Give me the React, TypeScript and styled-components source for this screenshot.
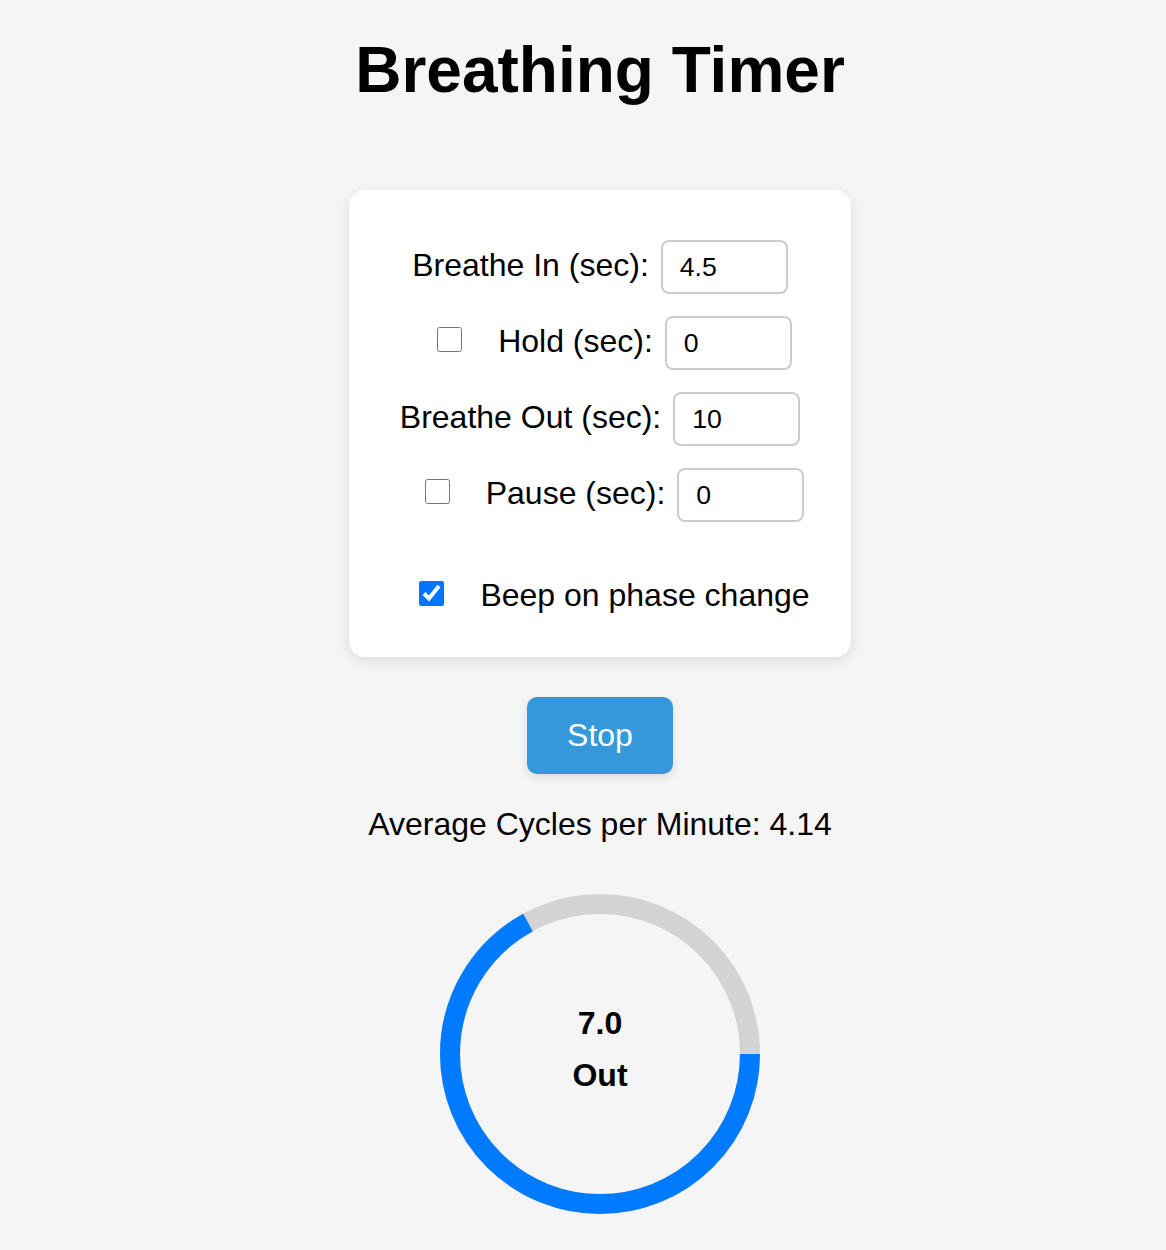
import { useState } from "react";
import styled, { createGlobalStyle } from "styled-components";

const GlobalStyle = createGlobalStyle`
  html, body {
    margin: 0;
    padding: 0;
    background-color: #f5f5f5;
  }
  body {
    font-family: "Liberation Sans", Arial, Helvetica, sans-serif;
    color: #000000;
  }
`;

const RADIUS = 150;
const CIRCUMFERENCE = 2 * Math.PI * RADIUS;

function App() {
  const [inhale, setInhale] = useState("4.5");
  const [hold, setHold] = useState("0");
  const [exhale, setExhale] = useState("10");
  const [pause, setPause] = useState("0");
  const [holdOn, setHoldOn] = useState(false);
  const [pauseOn, setPauseOn] = useState(false);
  const [beep, setBeep] = useState(true);

  // share of the current phase still left, drawn clockwise from 3 o'clock
  const progress = 0.67;

  return (
    <Page>
      <GlobalStyle />
      <Title>Breathing Timer</Title>

      <Card>
        <Row>
          <Label>Breathe In (sec):</Label>
          <NumberInput value={inhale} onChange={(e) => setInhale(e.target.value)} />
        </Row>
        <Row $withCheck>
          <Check checked={holdOn} onChange={(e) => setHoldOn(e.target.checked)} />
          <Label>Hold (sec):</Label>
          <NumberInput value={hold} onChange={(e) => setHold(e.target.value)} />
        </Row>
        <Row>
          <Label>Breathe Out (sec):</Label>
          <NumberInput value={exhale} onChange={(e) => setExhale(e.target.value)} />
        </Row>
        <Row $withCheck>
          <Check checked={pauseOn} onChange={(e) => setPauseOn(e.target.checked)} />
          <Label>Pause (sec):</Label>
          <NumberInput value={pause} onChange={(e) => setPause(e.target.value)} />
        </Row>
        <BeepRow $withCheck>
          <Check checked={beep} onChange={(e) => setBeep(e.target.checked)} />
          <BeepLabel>Beep on phase change</BeepLabel>
        </BeepRow>
      </Card>

      <StopButton>Stop</StopButton>

      <Stats>Average Cycles per Minute: 4.14</Stats>

      <Dial>
        <svg width="320" height="320" viewBox="0 0 320 320">
          <circle cx="160" cy="160" r={RADIUS} fill="none" stroke="#d3d3d3" strokeWidth="20" />
          <circle
            cx="160"
            cy="160"
            r={RADIUS}
            fill="none"
            stroke="#007bff"
            strokeWidth="20"
            strokeDasharray={CIRCUMFERENCE}
            strokeDashoffset={CIRCUMFERENCE * (1 - progress)}
          />
        </svg>
        <DialText>
          <DialLine>7.0</DialLine>
          <DialLine>Out</DialLine>
        </DialText>
      </Dial>
    </Page>
  );
}

export default App;

const Page = styled.div`
  display: flex;
  flex-direction: column;
  align-items: center;
  padding: 33px 0 40px 34px;
`;

const Title = styled.h1`
  margin: 0 0 83px;
  font-size: 64px;
  font-weight: bold;
  line-height: normal;
`;

const Card = styled.div`
  box-sizing: border-box;
  width: 502px;
  padding: 50px 0 43px;
  background: #ffffff;
  border-radius: 16px;
  box-shadow: 0 4px 14px rgba(0, 0, 0, 0.1);
  display: flex;
  flex-direction: column;
  align-items: center;
  gap: 22px;
`;

const Row = styled.div<{ $withCheck?: boolean }>`
  display: flex;
  align-items: baseline;
  justify-content: center;
  padding-left: ${(p) => (p.$withCheck ? "29px" : "0")};
`;

const BeepRow = styled(Row)`
  margin-top: 33px;
`;

const Label = styled.label`
  font-size: 32px;
  line-height: normal;
  margin-right: 12px;
`;

const BeepLabel = styled(Label)`
  margin-right: 0;
`;

const Check = styled.input.attrs({ type: "checkbox" })`
  width: 25px;
  height: 25px;
  margin: 0 36px 0 0;
  accent-color: #0075ff;
`;

const NumberInput = styled.input.attrs({ type: "text" })`
  box-sizing: border-box;
  width: 127px;
  height: 54px;
  padding: 10px 17px;
  border: 2px solid #cccccc;
  border-radius: 8px;
  font-family: "Liberation Sans", Arial, sans-serif;
  font-size: 26.67px;
  color: #000000;
  background: #ffffff;
  outline: none;
`;

const StopButton = styled.button`
  margin-top: 40px;
  padding: 20px 40px;
  border: none;
  border-radius: 10px;
  background-color: #3498db;
  color: #ffffff;
  font-family: "Liberation Sans", Arial, sans-serif;
  font-size: 32px;
  line-height: normal;
  box-shadow: 0 4px 8px rgba(0, 0, 0, 0.1);
  cursor: pointer;
`;

const Stats = styled.p`
  margin: 32px 0 0;
  font-size: 32px;
  line-height: normal;
`;

const Dial = styled.div`
  position: relative;
  width: 320px;
  height: 320px;
  margin-top: 51px;

  svg {
    display: block;
  }
`;

const DialText = styled.div`
  position: absolute;
  inset: 0;
  display: flex;
  flex-direction: column;
  align-items: center;
  justify-content: center;
  gap: 15px;
  padding-bottom: 10px;
`;

const DialLine = styled.div`
  font-size: 32px;
  font-weight: bold;
  line-height: normal;
`;
